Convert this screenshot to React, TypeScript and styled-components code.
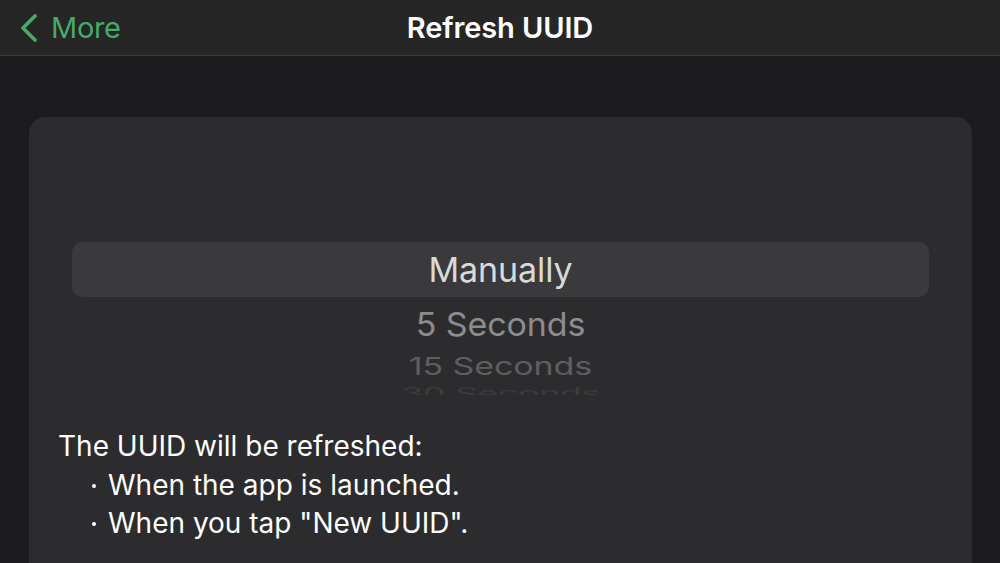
import React from "react";
import styled, { createGlobalStyle } from "styled-components";

const Global = createGlobalStyle`
  html, body { margin: 0; padding: 0; background: #1c1c1e; }
  body { font-family: Inter, "Open Sans", "Liberation Sans", sans-serif; -webkit-font-smoothing: antialiased; }
  #root { width: 1000px; height: 563px; overflow: hidden; }
`;

const Page = styled.div`
  width: 1000px;
  height: 563px;
  background: #1c1c1e;
  display: flex;
  flex-direction: column;
  overflow: hidden;
`;

const NavBar = styled.header`
  height: 56px;
  flex: none;
  background: #262626;
  border-bottom: 1px solid #3a3a3a;
  display: grid;
  grid-template-columns: 1fr auto 1fr;
  align-items: center;
  padding: 0 20px;
  box-sizing: border-box;
`;

const Back = styled.div`
  display: flex;
  align-items: center;
  gap: 13px;
  color: #47a96c;
  font-size: 29px;
  line-height: 1;
  letter-spacing: -0.3px;
`;

const Title = styled.h1`
  margin: 0;
  color: #ffffff;
  font-size: 29px;
  font-weight: 600;
  letter-spacing: -0.1px;
  line-height: 1;
`;

const Content = styled.main`
  flex: 1;
  padding: 61px 28px 0 29px;
`;

const Card = styled.section`
  background: #2c2c2e;
  border-radius: 16px 16px 0 0;
  height: 100%;
  padding: 125px 43px 0;
  box-sizing: border-box;
`;

const Wheel = styled.div`
  display: flex;
  flex-direction: column;
  height: 153px;
  overflow: hidden;
`;

const Row = styled.div<{ $h: number; $color: string; $sx: number; $sy: number; $selected?: boolean }>`
  height: ${(p) => p.$h}px;
  flex: none;
  display: flex;
  align-items: center;
  justify-content: center;
  border-radius: 10px;
  background: ${(p) => (p.$selected ? "#3a3a3c" : "transparent")};
  color: ${(p) => p.$color};
  font-size: 34px;
  letter-spacing: -0.1px;
  & > span {
    display: inline-block;
    transform: scale(${(p) => p.$sx}, ${(p) => p.$sy});
  }
`;

const Info = styled.div`
  margin-top: 32px;
  margin-left: -14px;
  color: #ffffff;
  font-size: 28px;
  line-height: 38.5px;
`;

const Bullet = styled.div`
  padding-left: 34px;
  display: flex;
  align-items: center;
  gap: 12px;
  &::before {
    content: "";
    width: 4px;
    height: 4px;
    border-radius: 50%;
    background: #ffffff;
    flex: none;
    margin-top: 2px;
  }
`;

const items = [
  { label: "Manually", h: 55, color: "#d9d9d9", sx: 1, sy: 1, selected: true },
  { label: "5 Seconds", h: 52, color: "#8c8c8e", sx: 1, sy: 0.97 },
  { label: "15 Seconds", h: 34, color: "#5e5e60", sx: 1.0, sy: 0.72 },
  { label: "30 Seconds", h: 20, color: "#3b3b3d", sx: 1.04, sy: 0.45 },
];

export default function App() {
  return (
    <Page>
      <Global />
      <NavBar>
        <Back>
          <svg width="18" height="28" viewBox="0 0 18 28" fill="none">
            <path d="M15 2 L3 14 L15 26" stroke="#47a96c" strokeWidth="3.6" strokeLinecap="round" strokeLinejoin="round" />
          </svg>
          <span>More</span>
        </Back>
        <Title>Refresh UUID</Title>
        <div />
      </NavBar>
      <Content>
        <Card>
          <Wheel>
            {items.map((it) => (
              <Row key={it.label} $h={it.h} $color={it.color} $sx={it.sx} $sy={it.sy} $selected={it.selected}>
                <span>{it.label}</span>
              </Row>
            ))}
          </Wheel>
          <Info>
            <div>The UUID will be refreshed:</div>
            <Bullet>When the app is launched.</Bullet>
            <Bullet>When you tap "New UUID".</Bullet>
          </Info>
        </Card>
      </Content>
    </Page>
  );
}
